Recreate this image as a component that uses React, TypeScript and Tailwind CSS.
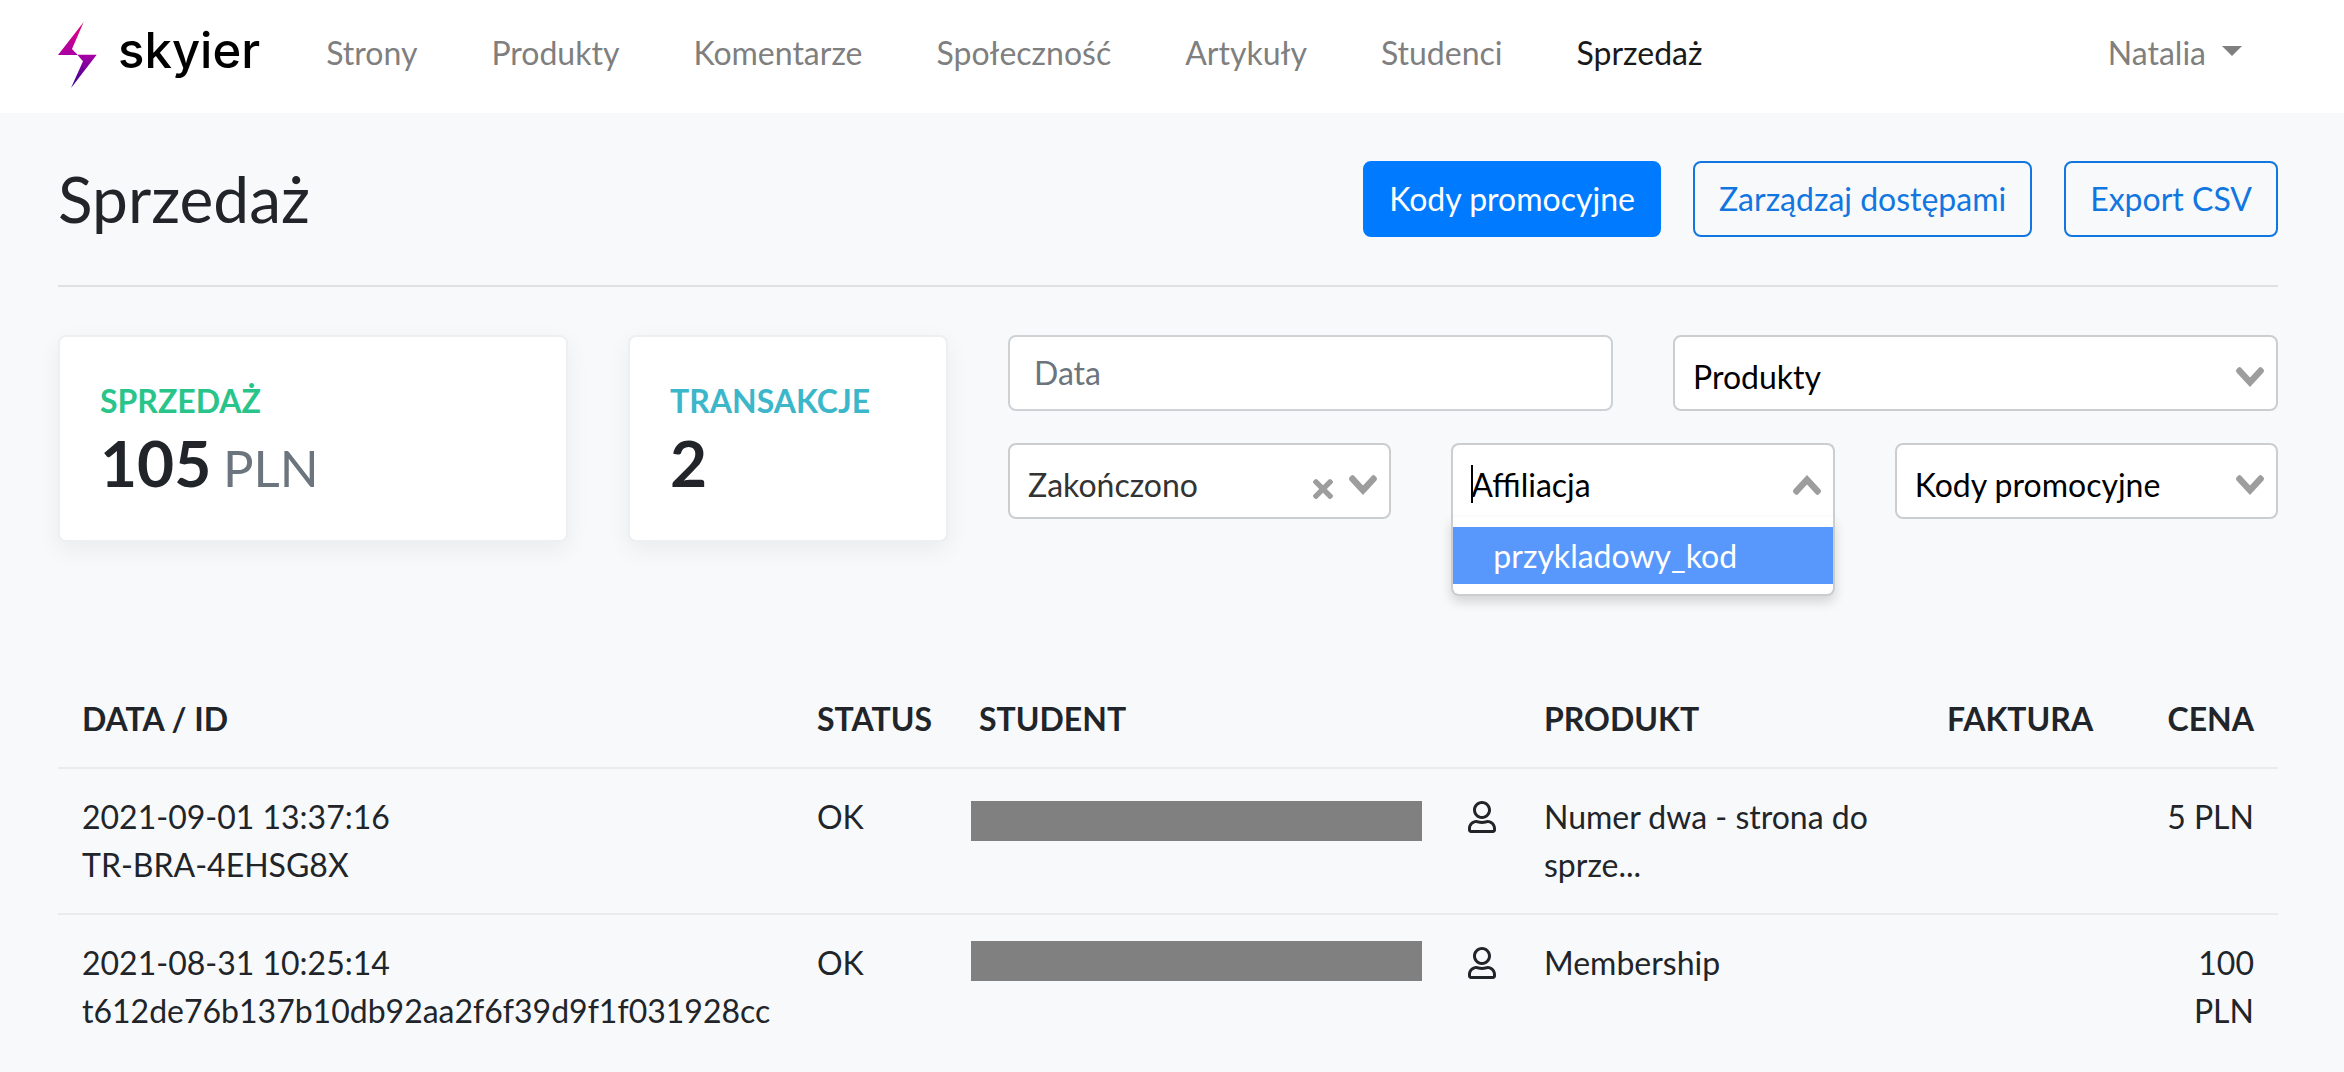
import React, { useState } from 'react';
import { FaRegUser } from 'react-icons/fa';
import clsx from 'clsx';

interface Transaction {
    id: string;
    date: string;
    status: string;
    product: string;
    price: string;
    maskClass: string;
}

const navLinks = ['Strony', 'Produkty', 'Komentarze', 'Społeczność', 'Artykuły', 'Studenci', 'Sprzedaż'];

const transactions: Transaction[] = [
    {
        id: 'TR-BRA-4EHSG8X',
        date: '2021-09-01 13:37:16',
        status: 'OK',
        product: 'Numer dwa - strona do sprze...',
        price: '5 PLN',
        maskClass: 'mt-2',
    },
    {
        id: 't612de76b137b10db92aa2f6f39d9f1f031928cc',
        date: '2021-08-31 10:25:14',
        status: 'OK',
        product: 'Membership',
        price: '100 PLN',
        maskClass: 'mt-0.5',
    },
];

const Logo: React.FC = () => (
    <a href="#" className="flex items-center gap-5 text-black">
        <svg width="40" height="66" viewBox="0 0 40 66" aria-hidden="true">
            <defs>
                <linearGradient id="bolt" x1="0" y1="0" x2="0" y2="66" gradientUnits="userSpaceOnUse">
                    <stop offset="0" stopColor="#e6007a" />
                    <stop offset="0.5" stopColor="#a800a4" />
                    <stop offset="1" stopColor="#2a0092" />
                </linearGradient>
            </defs>
            <path
                d="M25.7 0 L0 33 H19.5 L25 39.2 L13 66 L38.7 32.8 H19.5 L14 27 Z"
                fill="url(#bolt)"
            />
        </svg>
        <span className="mb-2 font-['Inter',sans-serif] text-[49px] leading-[60px] font-medium">skyier</span>
    </a>
);

const Chevron: React.FC<{ up?: boolean }> = ({ up }) => (
    <svg
        width="28"
        height="20"
        viewBox="0 0 14 10"
        className={clsx('pointer-events-none absolute top-8 right-3.5 fill-[#9d9d9d]', up && 'rotate-180')}
        aria-hidden="true"
    >
        <path d="M9.211364 7.59931l4.48338-4.867229c.407008-.441854.407008-1.158247 0-1.60046l-.73712-.80023c-.407008-.441854-1.066904-.441854-1.474243 0L7 5.198617 2.51662.33139c-.407008-.441853-1.066904-.441853-1.474243 0l-.737121.80023c-.407008.441854-.407008 1.158248 0 1.600461l4.48338 4.867228L7 10l2.211364-2.40069z" />
    </svg>
);

const FilterSelect: React.FC<{ label: string; value: string; clearable?: boolean }> = ({ label, value, clearable }) => (
    <div className="relative">
        <select
            aria-label={label}
            className={clsx(
                'block h-[76px] w-full appearance-none rounded-lg border-2 border-[#cccdcf] bg-white pt-2 pr-16 pl-[18px]',
                clearable ? 'text-[#333]' : 'text-black',
            )}
        >
            <option>{value}</option>
        </select>
        {clearable && (
            <button type="button" aria-label="Wyczyść" className="absolute top-9 right-[58px]">
                <svg width="20" height="20" viewBox="0 0 10 10" className="block fill-[#9d9d9d]">
                    <path d="M6.895455 5l2.842897-2.842898c.348864-.348863.348864-.914488 0-1.263636L9.106534.261648c-.348864-.348864-.914489-.348864-1.263636 0L5 3.104545 2.157102.261648c-.348863-.348864-.914488-.348864-1.263636 0L.261648.893466c-.348864.348864-.348864.914489 0 1.263636L3.104545 5 .261648 7.842898c-.348864.348863-.348864.914488 0 1.263636l.631818.631818c.348864.348864.914773.348864 1.263636 0L5 6.895455l2.842898 2.842897c.348863.348864.914772.348864 1.263636 0l.631818-.631818c.348864-.348864.348864-.914489 0-1.263636L6.895455 5z" />
                </svg>
            </button>
        )}
        <Chevron />
    </div>
);

const AffiliateSelect: React.FC = () => {
    const [open, setOpen] = useState(true);
    const [value, setValue] = useState('');

    return (
        <div className="relative">
            <input
                role="combobox"
                aria-label="Afiliacja"
                aria-expanded={open}
                aria-controls="affiliate-options"
                placeholder="Affiliacja"
                value={value}
                onChange={(e) => setValue(e.target.value)}
                onClick={() => setOpen(true)}
                className={clsx(
                    'block h-[76px] w-full border-2 border-[#cccdcf] bg-white pt-1.5 pr-16 pl-[18px] text-black outline-none placeholder:text-black',
                    open ? 'rounded-t-lg border-b-0 pb-0.5' : 'rounded-lg',
                )}
            />
            {open && <span className="absolute top-[22px] left-5 h-[38px] w-0.5 bg-black" />}
            <Chevron up={open} />
            {open && (
                <ul
                    id="affiliate-options"
                    role="listbox"
                    className="absolute top-[74px] left-0 z-10 w-full rounded-b-lg border-2 border-t-0 border-[#cccdcf] bg-white py-2.5 shadow-[0_6px_12px_rgba(0,0,0,0.15)]"
                >
                    <li
                        role="option"
                        aria-selected="true"
                        onClick={() => {
                            setValue('przykladowy_kod');
                            setOpen(false);
                        }}
                        className="cursor-pointer bg-[#5897fb] px-10 py-1.5 leading-[45px] text-white"
                    >
                        przykladowy_kod
                    </li>
                </ul>
            )}
        </div>
    );
};

const cardClass =
    'rounded-lg border-2 border-[#eeeff0] bg-white p-10 shadow-[0_8px_24px_rgba(0,0,0,0.06)]';
const outlineButton = 'rounded-lg border-2 border-[#1276e0] px-6 py-3 text-[#1276e0]';

const App: React.FC = () => {
    return (
        <div className="min-h-screen bg-[#f8f9fb] font-['Lato',sans-serif] text-[32px] leading-[48px] text-[#212529]">
            <header className="flex h-[113px] items-center bg-white pr-[102px] pb-1 pl-[58px]">
                <Logo />
                <nav className="mb-1 ml-[66px] flex grow gap-[74px]">
                    {navLinks.map((link) => (
                        <a
                            key={link}
                            href="#"
                            className={link === 'Sprzedaż' ? 'text-[#191919]' : 'text-[#7f7f7f]'}
                        >
                            {link}
                        </a>
                    ))}
                </nav>
                <button type="button" className="mb-1 flex items-center gap-4 text-[#7f7f7f]">
                    Natalia
                    <span className="mb-1 border-x-[10px] border-t-[10px] border-x-transparent border-t-[#7f7f7f]" />
                </button>
            </header>

            <main className="pt-12 pr-[66px] pl-[58px]">
                <div className="flex items-center justify-between border-b-2 border-[#dfe0e2] pb-12">
                    <h1 className="text-[64px] leading-[76px]">Sprzedaż</h1>
                    <div className="flex gap-8">
                        <button type="button" className="rounded-lg border-2 border-[#007bff] bg-[#007bff] px-6 py-3 text-white">
                            Kody promocyjne
                        </button>
                        <button type="button" className={outlineButton}>Zarządzaj dostępami</button>
                        <button type="button" className={outlineButton}>Export CSV</button>
                    </div>
                </div>

                <div className="mt-12 grid grid-cols-12 items-start gap-x-[60px]">
                    <div className={clsx('col-span-3', cardClass)}>
                        <div className="font-bold text-[#28c48a]">SPRZEDAŻ</div>
                        <div className="text-[64px] leading-[75px] font-bold">
                            105 <span className="-ml-1 text-[51px] leading-none font-normal text-[#6c757d]">PLN</span>
                        </div>
                    </div>
                    <div className={clsx('col-span-2', cardClass)}>
                        <div className="font-bold text-[#3cb6c9]">TRANSAKCJE</div>
                        <div className="text-[64px] leading-[75px] font-bold">2</div>
                    </div>
                    <div className="col-span-7 grid grid-cols-6 gap-x-[60px] gap-y-8">
                        <div className="col-span-3">
                            <input
                                type="text"
                                aria-label="Data"
                                placeholder="Data"
                                className="block h-[76px] w-full rounded-lg border-2 border-[#ced2d5] bg-white px-6 pb-0.5 placeholder:text-[#6c757d]"
                            />
                        </div>
                        <div className="col-span-3">
                            <FilterSelect label="Produkty" value="Produkty" />
                        </div>
                        <div className="col-span-2">
                            <FilterSelect label="Status" value="Zakończono" clearable />
                        </div>
                        <div className="col-span-2">
                            <AffiliateSelect />
                        </div>
                        <div className="col-span-2">
                            <FilterSelect label="Kody promocyjne" value="Kody promocyjne" />
                        </div>
                    </div>
                </div>

                <table className="mt-[129px] w-full table-fixed text-left">
                    <colgroup>
                        <col className="w-[735px]" />
                        <col className="w-[162px]" />
                        <col />
                        <col className="w-[403px]" />
                        <col className="w-[219px]" />
                        <col className="w-[136px]" />
                    </colgroup>
                    <thead>
                        <tr>
                            <th className="p-6">DATA / ID</th>
                            <th className="p-6">STATUS</th>
                            <th className="p-6">STUDENT</th>
                            <th className="p-6">PRODUKT</th>
                            <th className="p-6">FAKTURA</th>
                            <th className="p-6 text-right">CENA</th>
                        </tr>
                    </thead>
                    <tbody>
                        {transactions.map((t) => (
                            <tr key={t.id} className="border-t-2 border-[#e9ebed] align-top">
                                <td className="p-6">
                                    {t.date}
                                    <br />
                                    {t.id}
                                </td>
                                <td className="p-6">{t.status}</td>
                                <td className="p-6">
                                    <div className="-ml-2 flex items-start justify-between">
                                        <div className={clsx('h-10 w-[451px] bg-[#808080]', t.maskClass)} />
                                        <a href="#" aria-label="Profil studenta" className="mt-2">
                                            <FaRegUser size={32} className="-mr-0.5" />
                                        </a>
                                    </div>
                                </td>
                                <td className="p-6">{t.product}</td>
                                <td className="p-6"></td>
                                <td className="p-6 text-right">{t.price}</td>
                            </tr>
                        ))}
                    </tbody>
                </table>
            </main>
        </div>
    );
};

export default App;
